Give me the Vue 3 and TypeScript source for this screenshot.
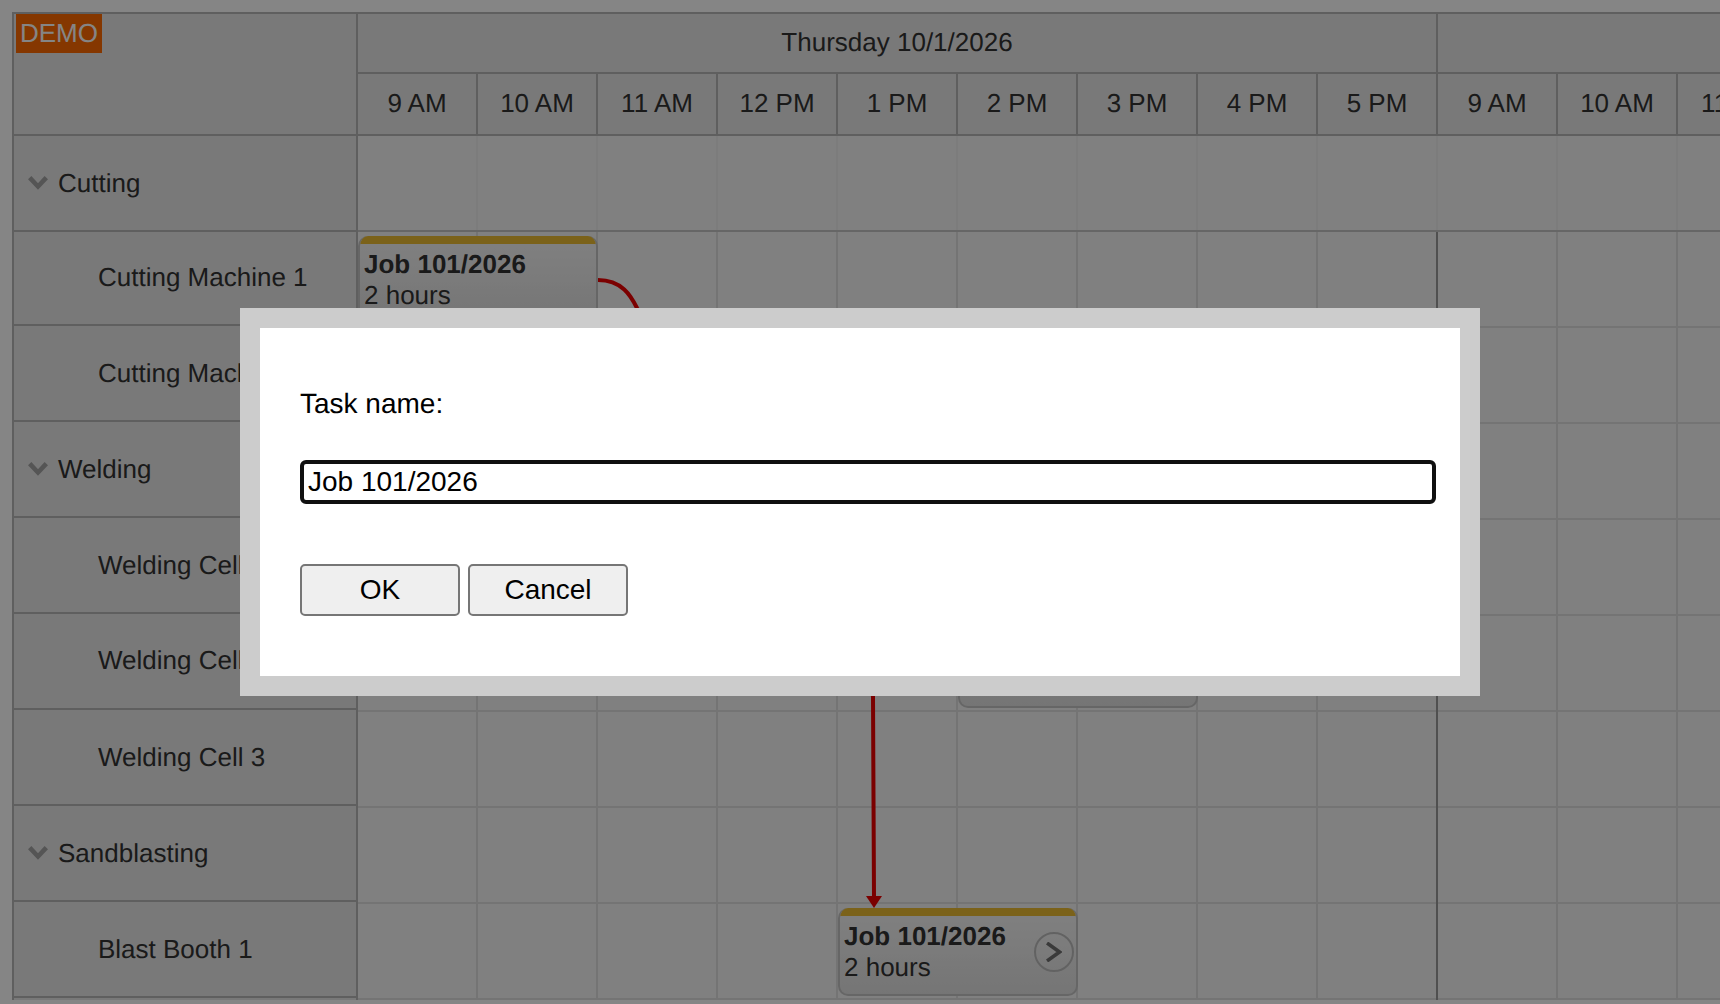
<script setup lang="ts">
import { ref } from 'vue'

interface Resource {
  name: string
  group?: boolean
  short?: boolean
  raised?: boolean
}

interface Job {
  id: number
  left: number
  top: number
  open?: boolean
}

const hours = ['9 AM', '10 AM', '11 AM', '12 PM', '1 PM', '2 PM', '3 PM', '4 PM', '5 PM', '9 AM', '10 AM', '11 AM']

const resources: Resource[] = [
  { name: 'Cutting', group: true },
  { name: 'Cutting Machine 1', short: true, raised: true },
  { name: 'Cutting Machine 2' },
  { name: 'Welding', group: true },
  { name: 'Welding Cell 1' },
  { name: 'Welding Cell 2', raised: true },
  { name: 'Welding Cell 3' },
  { name: 'Sandblasting', group: true },
  { name: 'Blast Booth 1' }
]

const jobs: Job[] = [
  { id: 1, left: 0, top: 100 },
  { id: 2, left: 600, top: 484 },
  { id: 3, left: 480, top: 772, open: true }
]

const taskName = ref('Job 101/2026')
</script>

<template>
  <div class="page">
    <div class="scheduler">
      <div class="head">
        <div class="corner"></div>
        <div class="timeline">
          <div class="day-row">
            <div class="day">Thursday 10/1/2026</div>
            <div class="day"></div>
          </div>
          <div class="hour-row">
            <div v-for="(hour, i) in hours" :key="i" class="hour">{{ hour }}</div>
          </div>
        </div>
      </div>

      <div class="body">
        <div class="side">
          <div
            v-for="res in resources"
            :key="res.name"
            class="res"
            :class="{ group: res.group, short: res.short, raised: res.raised }"
          >
            <svg v-if="res.group" class="chevron" viewBox="0 0 20 14" fill="none">
              <path d="M1.7 1.7L10 10.5l8.3-8.8" stroke="currentColor" stroke-width="4.6" />
            </svg>
            {{ res.name }}
          </div>
        </div>

        <div class="canvas">
          <div v-for="(res, r) in resources" :key="res.name" class="row" :class="{ first: r === 0 }">
            <div v-for="(hour, i) in hours" :key="i" class="cell"></div>
          </div>
          <div class="day-line"></div>

          <div
            v-for="job in jobs"
            :key="job.id"
            class="job"
            :style="{ left: job.left + 'px', top: job.top + 'px' }"
          >
            <div class="job-bar"></div>
            <div class="job-text">
              <b class="job-title">Job 101/2026</b>
              2 hours
            </div>
            <span v-if="job.open" class="job-open">
              <svg viewBox="0 0 16 20" fill="none" width="16" height="20">
                <path d="M1 1L13.5 10 1 19" stroke="currentColor" stroke-width="3.6" />
              </svg>
            </span>
          </div>

          <svg class="links" width="1362" height="868" fill="none">
            <path d="M240 144C264 144 273 160 279 172L515 560 516 762" stroke="#ec0000" stroke-width="4" />
            <path d="M508 760h16l-8 12z" fill="#ec0000" />
          </svg>
        </div>
      </div>
    </div>

    <div class="demo">DEMO</div>

    <div class="overlay">
      <div class="dialog">
        <label class="label" for="task-name">Task name:</label>
        <input id="task-name" v-model="taskName" class="input" type="text" />
        <div class="actions">
          <button class="btn" type="button">OK</button>
          <button class="btn" type="button">Cancel</button>
        </div>
      </div>
    </div>
  </div>
</template>

<style>
html,
body {
  margin: 0;
  overflow: hidden;
}
</style>

<style scoped>
.page {
  position: relative;
  box-sizing: border-box;
  height: 100vh;
  overflow: hidden;
  padding: 12px 0 0 12px;
  background: #fff;
  color: #333;
  font-family: "Liberation Sans", Arial, sans-serif;
  font-size: 26px;
  text-rendering: geometricPrecision;
}

.scheduler {
  width: 1708px;
  border-top: 2px solid #b7b7b7;
  border-left: 2px solid #b7b7b7;
  box-sizing: border-box;
}

.head {
  display: flex;
  height: 122px;
  border-bottom: 2px solid #b7b7b7;
  box-sizing: border-box;
  background: #e8e8e8;
}

.corner {
  flex: none;
  width: 342px;
  border-right: 2px solid #b7b7b7;
}

.timeline {
  flex: none;
  width: 1440px;
}

.day-row {
  display: flex;
  height: 60px;
  border-bottom: 2px solid #b7b7b7;
  box-sizing: border-box;
}

.day {
  flex: none;
  width: 1080px;
  box-sizing: border-box;
  border-right: 2px solid #b7b7b7;
  display: flex;
  align-items: center;
  justify-content: center;
  padding-bottom: 2px;
}

.hour-row {
  display: flex;
  height: 60px;
}

.hour {
  flex: none;
  width: 120px;
  box-sizing: border-box;
  border-right: 2px solid #b7b7b7;
  display: flex;
  align-items: center;
  justify-content: center;
  padding-bottom: 2px;
}

.body {
  display: flex;
}

.side {
  flex: none;
  width: 344px;
  box-sizing: border-box;
  border-right: 2px solid #b7b7b7;
  background: #e8e8e8;
}

.res {
  display: flex;
  align-items: center;
  height: 96px;
  box-sizing: border-box;
  padding-left: 84px;
  border-bottom: 2px solid #b7b7b7;
}

.res.short {
  height: 94px;
}

.res.raised {
  padding-bottom: 2px;
}

.res.group {
  padding-left: 14px;
}

.chevron {
  flex: none;
  width: 20px;
  height: 14px;
  margin-right: 10px;
  color: #a3a3a3;
}

.canvas {
  position: relative;
  flex: none;
  width: 1362px;
  overflow: hidden;
  background: #f5f5f5;
}

.row {
  display: flex;
  width: 1440px;
  height: 96px;
  box-sizing: border-box;
  border-bottom: 2px solid #dedede;
}

.row.first {
  border-bottom-color: #c4c4c4;
}

.cell {
  flex: none;
  width: 120px;
  box-sizing: border-box;
  border-right: 2px solid #dedede;
}

.row.first .cell {
  border-right-color: #eee;
}

.day-line {
  position: absolute;
  left: 1078px;
  top: 96px;
  bottom: 0;
  width: 2px;
  background: #999;
}

.job {
  position: absolute;
  box-sizing: border-box;
  width: 240px;
  height: 88px;
  border: 2px solid #c4c4c4;
  border-top: 0;
  border-radius: 10px;
  overflow: hidden;
  background: linear-gradient(#f6f6f6, #e1e1e1);
}

.job-bar {
  height: 8px;
  margin: 0 -2px;
  background: #ebbc32;
}

.job-text {
  padding: 5px 4px 0;
  line-height: 30px;
}

.job-title {
  display: block;
  margin-bottom: 1px;
}

.job-open {
  position: absolute;
  right: 2px;
  top: 24px;
  display: flex;
  align-items: center;
  justify-content: center;
  box-sizing: border-box;
  width: 40px;
  height: 40px;
  border: 2px solid #bdbdbd;
  border-radius: 50%;
  color: #707070;
}

.links {
  position: absolute;
  left: 0;
  top: 0;
  pointer-events: none;
}

.demo {
  position: absolute;
  left: 16px;
  top: 14px;
  padding: 4px;
  height: 31px;
  line-height: 31px;
  background: #ff6a00;
  color: #fff;
}

.overlay {
  position: fixed;
  inset: 0;
  display: flex;
  align-items: center;
  justify-content: center;
  background: rgba(0, 0, 0, 0.48);
}

.dialog {
  display: flex;
  flex-direction: column;
  align-items: flex-start;
  box-sizing: border-box;
  width: 1240px;
  height: 388px;
  padding: 60px 24px 60px 40px;
  border: 20px solid #ccc;
  background: #fff;
  color: #000;
  font-size: 28px;
}

.label {
  line-height: 32px;
  margin-bottom: 40px;
}

.input {
  box-sizing: border-box;
  width: 1136px;
  height: 44px;
  padding: 0 4px;
  border: 4px solid #101010;
  border-radius: 6px;
  outline: none;
  color: #000;
  font: inherit;
}

.actions {
  display: flex;
  gap: 8px;
  margin-top: 60px;
}

.btn {
  box-sizing: border-box;
  width: 160px;
  height: 52px;
  padding: 0;
  border: 2px solid #767676;
  border-radius: 5px;
  background: #efefef;
  color: #000;
  font: inherit;
}
</style>
